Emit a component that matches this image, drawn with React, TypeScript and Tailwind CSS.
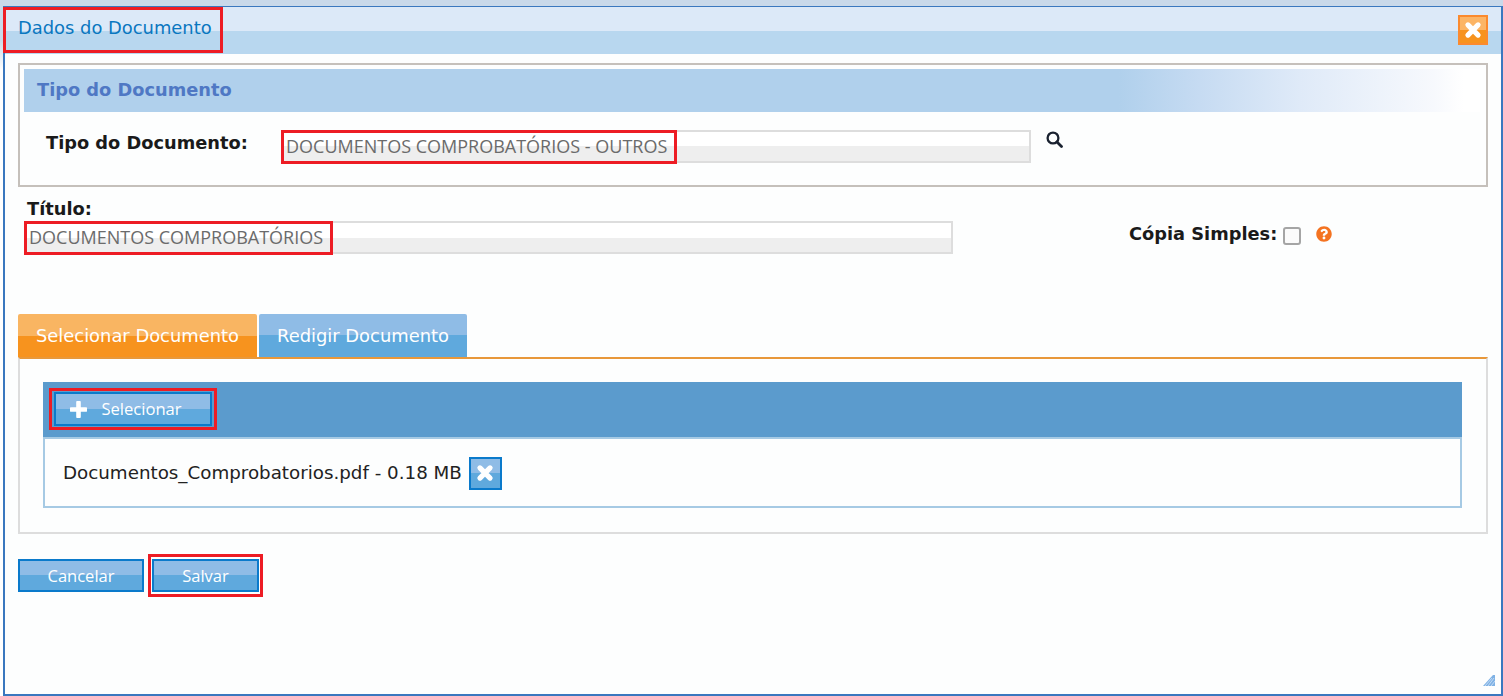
import { FaQuestionCircle } from "react-icons/fa";

const dejavu = "font-['DejaVu_Sans','Verdana',sans-serif]";
const openSans = "font-['Open_Sans','Noto_Sans',sans-serif]";
const blueBtn =
	"flex items-center justify-center border-2 border-[#0a7acb] bg-[linear-gradient(#8fbce6_50%,#5fa9dd_50%)] text-white";

function ThickX({ size }: { size: number }) {
	return (
		<svg width={size} height={size} viewBox="0 0 16 16">
			<path d="M3.5 3.5 L12.5 12.5 M12.5 3.5 L3.5 12.5" stroke="#ffffff" strokeWidth="4.6" strokeLinecap="round" fill="none" />
		</svg>
	);
}

function ThickPlus() {
	return (
		<svg width="17" height="17" viewBox="0 0 17 17">
			<path d="M8.5 1.5 L8.5 15.5 M1.5 8.5 L15.5 8.5" stroke="#ffffff" strokeWidth="4.6" strokeLinecap="round" fill="none" />
		</svg>
	);
}

function SearchIcon() {
	return (
		<svg width="17" height="17" viewBox="0 0 17 17" className="ml-[15px] mt-[1px]" fill="none" stroke="#1a2230">
			<circle cx="7" cy="7" r="5.4" strokeWidth="2.3" />
			<path d="M11 11 L15.5 15.5" strokeWidth="2.8" strokeLinecap="round" />
		</svg>
	);
}

function Field({ width, text, boxWidth, className }: { width: string; text: string; boxWidth: string; className?: string }) {
	return (
		<div
			className={`relative h-[33px] ${width} border-2 border-[#dddddd] bg-[linear-gradient(#ffffff_50%,#eeeeee_50%)] ${className ?? ""}`}
		>
			<div
				className={`absolute -left-[2px] -top-[2px] flex h-[34px] ${boxWidth} items-center whitespace-nowrap border-[3px] border-[#ed1c24] pb-[2px] pl-[2px] ${openSans} text-[18px] text-[#6b6b6b]`}
			>
				{text}
			</div>
		</div>
	);
}

function ResizeHandle() {
	return (
		<svg width="12" height="12" viewBox="0 0 12 12" className="absolute bottom-[7px] right-[6px]">
			<path d="M10 0 L12 0 L12 11 L0 11 Z" fill="#7fb2e5" />
			<path d="M9 3 L2 11 M11 3 L5 11 M12 6 L8 11" stroke="#d5e6f7" strokeWidth="0.8" fill="none" />
		</svg>
	);
}

export default function App() {
	return (
		<div className={`h-[696px] w-[1503px] overflow-hidden bg-[linear-gradient(#c9d9ea_0,#c9d9ea_40px,#ffffff_70px)] pl-[3px] pt-[6px] ${dejavu}`}>
			<div className="relative flex h-[690px] w-[1500px] flex-col border-x-2 border-b-2 border-t border-[#3a78bf] bg-[#fdfefe]">
				<div className="flex h-[47px] items-start justify-between bg-[linear-gradient(#dce9f8_24px,#b8d7ef_24px)]">
					<div className="-ml-[2px] flex h-[46px] w-[220px] items-center border-[3px] border-[#ed1c24] pb-[3px] pl-[12px] text-[17.9px] text-[#0a77c0]">
						Dados do Documento
					</div>
					<button className="mr-[13px] mt-[8px] flex h-[30px] w-[30px] items-center justify-center border-2 border-[#fb8a2e] bg-[linear-gradient(#fcb566_50%,#f7931e_50%)]">
						<ThickX size={18} />
					</button>
				</div>

				<div className="ml-[13px] mt-[9px] h-[124px] w-[1470px] border-2 border-[#c5c0bb] p-[4px]">
					<div className="flex h-[43px] w-[1456px] items-center bg-[linear-gradient(90deg,#b0d0ec_0,#b0d0ec_1095px,#c6dbf2_1176px,#dfeaf8_1276px,#f7f9fd_1410px,#ffffff_1440px)] pl-[13px] text-[17.8px] font-bold text-[#4f78c4]">
						Tipo do Documento
					</div>
					<div className="mt-[18px] flex items-start">
						<span className="ml-[22px] mt-[1px] w-[235px] text-[17.8px] font-bold leading-[24px] text-[#1a1a1a]">Tipo do Documento:</span>
						<Field width="w-[750px]" boxWidth="w-[396px]" text="DOCUMENTOS COMPROBATÓRIOS - OUTROS" />
						<SearchIcon />
					</div>
				</div>

				<div className="ml-[13px] mt-[9px] flex items-start">
					<div className="w-[1111px]">
						<div className="pl-[9px] pt-[1px] text-[17.8px] font-bold leading-[24px] text-[#1a1a1a]">Título:</div>
						<Field width="w-[929px]" boxWidth="w-[309px]" className="ml-[6px]" text="DOCUMENTOS COMPROBATÓRIOS" />
					</div>
					<div className="mt-[25px] flex items-start">
						<span className="mt-[1px] text-[17.8px] font-bold leading-[24px] text-[#1a1a1a]">Cópia Simples:</span>
						<span className="ml-[6px] mt-[6px] h-[18px] w-[18px] rounded-[3px] border-2 border-[#a5a5a5] bg-[#fbfbfb]" />
						<FaQuestionCircle className="ml-[15px] mt-[5px] text-[16px] text-[#f47321]" />
					</div>
				</div>

				<div className="ml-[13px] mt-[60px] flex h-[43px] items-start">
					<div className="flex h-[44px] w-[239px] items-center justify-center rounded-t-[2px] bg-[linear-gradient(#f9b562_50%,#f7931e_50%)] text-[17.9px] text-white">
						Selecionar Documento
					</div>
					<div className="ml-[2px] flex h-[43px] w-[208px] items-center justify-center rounded-t-[2px] bg-[linear-gradient(#8fbce6_50%,#5fa9dd_50%)] pt-[2px] text-[17.9px] text-white">
						Redigir Documento
					</div>
				</div>

				<div className="ml-[13px] h-[177px] w-[1470px] border-x-2 border-b-2 border-t-2 border-[#dddddd] border-t-[#e8983a] pl-[23px] pt-[23px]">
					<div className="flex h-[55px] w-[1419px] items-start bg-[#5b9bcd] pl-[6px] pt-[6px]">
						<div className="flex h-[42px] w-[168px] items-center justify-center border-[3px] border-[#ed1c24]">
							<button className={`${blueBtn} h-[34px] w-[158px] gap-[14px] pr-[14px] pt-[1px] ${openSans} text-[16.6px]`}>
								<ThickPlus />
								Selecionar
							</button>
						</div>
					</div>
					<div className="flex h-[71px] w-[1419px] items-center border-2 border-[#a6cae4] pl-[18px] pt-[1px] text-[18.27px] text-[#222222]">
						Documentos_Comprobatorios.pdf - 0.18 MB
						<button className={`${blueBtn} ml-[7px] h-[33px] w-[33px]`}>
							<ThickX size={18} />
						</button>
					</div>
				</div>

				<div className="ml-[9px] mt-[20px] flex items-center">
					<div className="ml-[4px] flex h-[43px] items-center">
						<button className={`${blueBtn} h-[33px] w-[126px] pt-[2px] ${openSans} text-[16.5px]`}>Cancelar</button>
					</div>
					<div className="ml-[4px] flex h-[43px] w-[115px] items-center justify-center border-[3px] border-[#ed1c24]">
						<button className={`${blueBtn} h-[33px] w-[107px] pt-[2px] ${openSans} text-[16.5px]`}>Salvar</button>
					</div>
				</div>

				<ResizeHandle />
			</div>
		</div>
	);
}
